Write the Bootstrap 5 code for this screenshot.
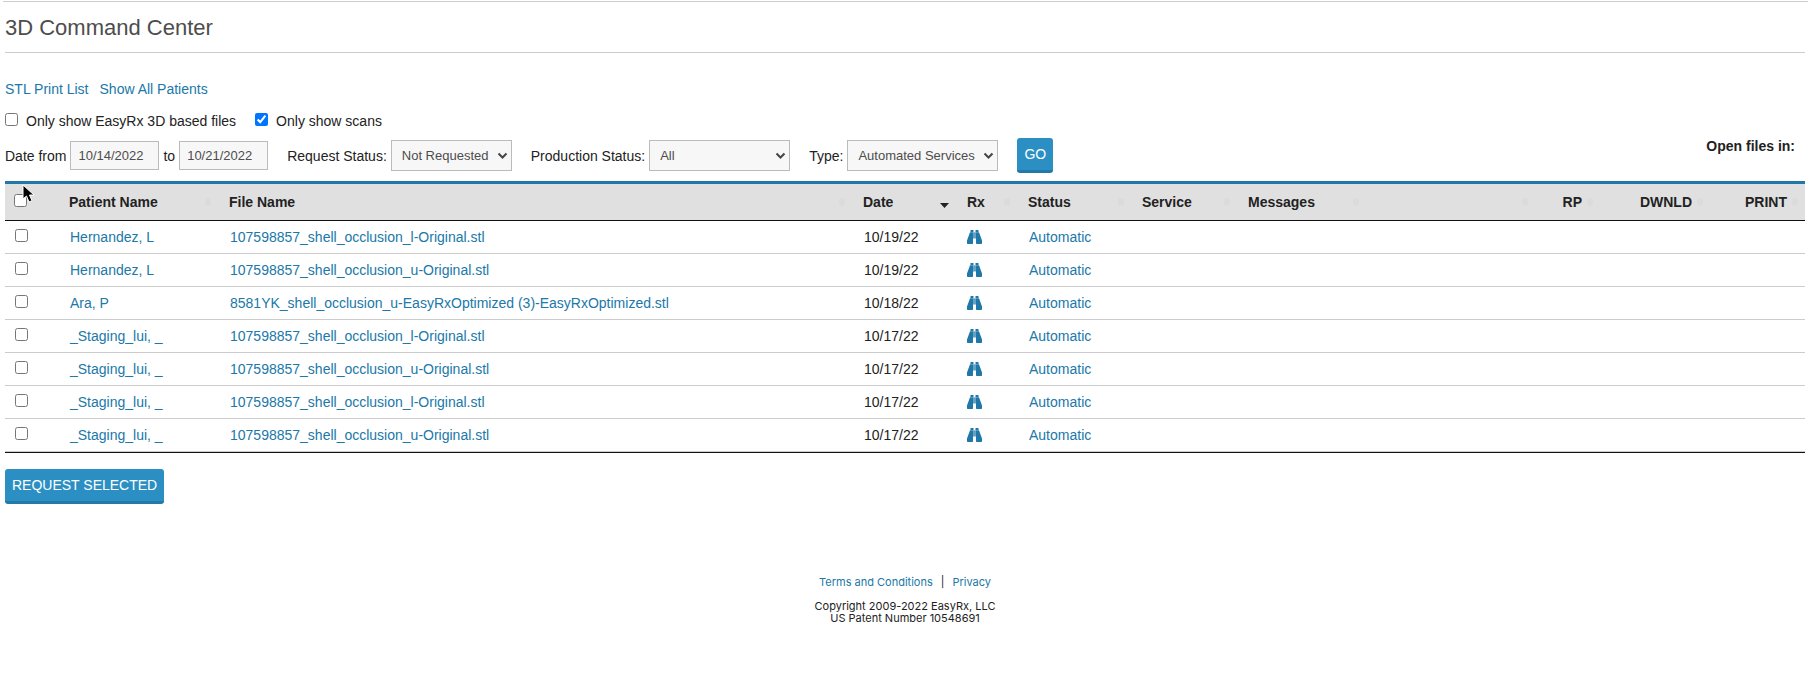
<!DOCTYPE html>
<html lang="en">
<head>
<meta charset="utf-8">
<meta name="viewport" content="width=device-width, initial-scale=1">
<title>3D Command Center</title>
<link rel="stylesheet" href="https://cdn.jsdelivr.net/npm/bootstrap@5.3.0/dist/css/bootstrap.min.css">
<style>
  body { font-family: "Liberation Sans", Arial, sans-serif; font-size: 14px; line-height: 20px; color: #222; background: #fff; padding: 0 11px 0 5px; }
  a { color: #2078a8; text-decoration: none; }
  a:hover { text-decoration: underline; }
  .top-rule { height: 1px; margin: 1px -3px 0 -2px; background: #ccc; }
  .page-title { font-size: 22px; line-height: 30px; font-weight: 400; color: #4d4d4d; padding: 11px 0 9px; margin: 0 0 26px; border-bottom: 1px solid #ccc; }
  .list-links { column-gap: 11px; }
  .tick { width: 13px; height: 13px; margin: 0; flex: none; }
  .check-row { margin-top: 12px; column-gap: 19px; }
  .check-row label { column-gap: 8px; }
  .check-row .tick { margin-bottom: 3px; }
  .filters { margin-top: 7px; }
  .filters .text-box, .filters .drop { font-size: 13px; color: #4d4d4d; background-color: #f7f7f7; border: 1px solid #bbb; border-radius: 0; box-shadow: none; }
  .filters .text-box { width: 89px; height: 29px; padding: 0 7px; }
  .filters .drop { height: 31px; padding: 0 20px 0 10px; line-height: 29px; background-position: right 3px center; background-size: 11px 11px;
    background-image: url("data:image/svg+xml,%3Csvg xmlns='http://www.w3.org/2000/svg' viewBox='0 0 11 11'%3E%3Cpath d='M1.500 3.500 5.500 7.500 9.500 3.500' fill='none' stroke='%23444' stroke-width='2'/%3E%3C/svg%3E"); }
  .field { margin-left: 19px; }
  .drop-request { width: 121px; }
  .drop-production { width: 141px; }
  .drop-type { width: 151px; }
  .action { font-size: 14px; line-height: 20px; font-weight: 400; text-transform: uppercase; color: #fff; background: #2b8fc4; border: 0; border-bottom: 3px solid #2379a8; border-radius: 3px; padding: 6px 7px; }
  .action:hover { color: #fff; background: #2379a8; }
  .open-in { margin-top: -20px; padding-right: 10px; }
  .files { table-layout: fixed; width: 100%; margin: 8px 0 16px; border-top: 3px solid #2078a8; border-bottom: 1px solid #111; border-collapse: separate; border-spacing: 0; }
  .files th { height: 37px; padding: 0; background: #e0e0e0; border-bottom: 1px solid #111; vertical-align: middle; }
  .files td { height: 33px; padding: 0 0 0 11px; border-bottom: 1px solid #ccc; vertical-align: middle; white-space: nowrap; }
  .head { height: 20px; padding: 0 8px 0 10px; }
  .head.end-col { justify-content: flex-end; column-gap: 5px; padding-right: 7px; }
  .files .tick { display: block; }
  .files th .tick { margin: -4px 0 0 9px; }
  .files td .tick { margin: -3px 0 0 -1px; }
  .c-tick { width: 54px; } .c-name { width: 160px; } .c-date { width: 104px; } .c-rx { width: 61px; }
  .c-status { width: 114px; } .c-service { width: 106px; } .c-msg { width: 129px; } .c-blank { width: 168px; }
  .c-rp { width: 65px; } .c-dl { width: 110px; } .c-print { width: 95px; }
  .sorter { width: 6px; height: 8px; border-radius: 3px; background: #dbdbdb; }
  .sorted { width: 9px; height: 5px; margin-top: 7px; background: #222; clip-path: polygon(0 0, 100% 0, 50% 100%); }
  .rx-icon { display: block; width: 15px; height: 14px; margin-left: -1px; fill: #2078a8; }
  .pointer { position: absolute; left: 22px; top: 184px; width: 15px; height: 19px; pointer-events: none; }
  footer { font-family: Inter, sans-serif; font-size: 11px; line-height: 12px; margin-top: 72px; }
</style>
</head>
<body>
<div class="top-rule"></div>
<h1 class="page-title">3D Command Center</h1>
<nav class="list-links d-flex" aria-label="Lists"><a href="#">STL Print List</a><a href="#">Show All Patients</a></nav>
<div class="check-row d-flex">
  <label class="d-flex align-items-center"><input class="tick" type="checkbox">Only show EasyRx 3D based files</label>
  <label class="d-flex align-items-center"><input class="tick" type="checkbox" checked>Only show scans</label>
</div>
<form class="filters d-flex align-items-center">
  <label class="me-1" for="from">Date from</label>
  <input class="text-box" id="from" type="text" value="10/14/2022">
  <label class="mx-1" for="to">to</label>
  <input class="text-box" id="to" type="text" value="10/21/2022">
  <label class="field me-1" for="request">Request Status:</label>
  <select class="form-select drop drop-request" id="request"><option>Not Requested</option></select>
  <label class="field me-1" for="production">Production Status:</label>
  <select class="form-select drop drop-production" id="production"><option>All</option></select>
  <label class="field me-1" for="type">Type:</label>
  <select class="form-select drop drop-type" id="type"><option>Automated Services</option></select>
  <button class="btn action field" type="button">Go</button>
  <strong class="open-in ms-auto">Open files in:</strong>
</form>
<table class="files">
  <colgroup><col class="c-tick"><col class="c-name"><col><col class="c-date"><col class="c-rx"><col class="c-status"><col class="c-service"><col class="c-msg"><col class="c-blank"><col class="c-rp"><col class="c-dl"><col class="c-print"></colgroup>
  <thead><tr>
    <th><input class="tick" type="checkbox" aria-label="Select all"></th>
    <th><div class="head d-flex align-items-center justify-content-between">Patient Name<i class="sorter"></i></div></th>
    <th><div class="head d-flex align-items-center justify-content-between">File Name<i class="sorter"></i></div></th>
    <th><div class="head d-flex align-items-center justify-content-between">Date<i class="sorted"></i></div></th>
    <th><div class="head d-flex align-items-center justify-content-between">Rx<i class="sorter"></i></div></th>
    <th><div class="head d-flex align-items-center justify-content-between">Status<i class="sorter"></i></div></th>
    <th><div class="head d-flex align-items-center justify-content-between">Service<i class="sorter"></i></div></th>
    <th><div class="head d-flex align-items-center justify-content-between">Messages<i class="sorter"></i></div></th>
    <th><div class="head end-col d-flex align-items-center"><i class="sorter"></i></div></th>
    <th><div class="head end-col d-flex align-items-center">RP<i class="sorter"></i></div></th>
    <th><div class="head end-col d-flex align-items-center">DWNLD<i class="sorter"></i></div></th>
    <th><div class="head end-col d-flex align-items-center">PRINT<i class="sorter"></i></div></th>
  </tr></thead>
  <tbody id="rows"></tbody>
</table>
<button class="btn action" type="button">Request Selected</button>
<footer class="text-center">
  <div><a href="#">Terms and Conditions</a><span class="mx-2">|</span><a href="#">Privacy</a></div>
  <div class="mt-2 pt-1">Copyright 2009-2022 EasyRx, LLC<br>US Patent Number 10548691</div>
</footer>
<svg class="pointer" viewBox="0 0 15 19" aria-hidden="true"><path d="M1 1V15L4.500 12 7 18 10 16.700 7.500 11H12Z" fill="#000" stroke="#fff" stroke-width="1"/></svg>
<script src="https://cdn.jsdelivr.net/npm/bootstrap@5.3.0/dist/js/bootstrap.bundle.min.js"></script>
<script>
  const lower = "107598857_shell_occlusion_l-Original.stl";
  const upper = "107598857_shell_occlusion_u-Original.stl";
  const files = [
    ["Hernandez, L", lower, "10/19/22"],
    ["Hernandez, L", upper, "10/19/22"],
    ["Ara, P", "8581YK_shell_occlusion_u-EasyRxOptimized (3)-EasyRxOptimized.stl", "10/18/22"],
    ["_Staging_lui, _", lower, "10/17/22"],
    ["_Staging_lui, _", upper, "10/17/22"],
    ["_Staging_lui, _", lower, "10/17/22"],
    ["_Staging_lui, _", upper, "10/17/22"]
  ];
  const binoculars = '<svg class="rx-icon" viewBox="0 0 15 14" aria-hidden="true"><path d="M3.500 0H6.500V2H3.500ZM8.500 0H11.500V2H8.500ZM3 2.300H6.500V8.500H6V13.300Q6 14 5.300 14H.7Q0 14 0 13.300V10.500ZM8.500 2.300H12L15 10.500V13.300Q15 14 14.300 14H9.700Q9 14 9 13.300V8.500H8.500Z"/><path d="M6.500 2.300H8.500V8.500H6.500Z" opacity=".7"/></svg>';
  document.getElementById("rows").innerHTML = files.map(([name, file, date]) => `<tr>
    <td><input class="tick" type="checkbox" aria-label="Select ${file}"></td>
    <td><a href="#">${name}</a></td><td><a href="#">${file}</a></td><td>${date}</td>
    <td><a href="#" aria-label="View prescription">${binoculars}</a></td><td><a href="#">Automatic</a></td>
    <td></td><td></td><td></td><td></td><td></td><td></td></tr>`).join("");
</script>
</body>
</html>
